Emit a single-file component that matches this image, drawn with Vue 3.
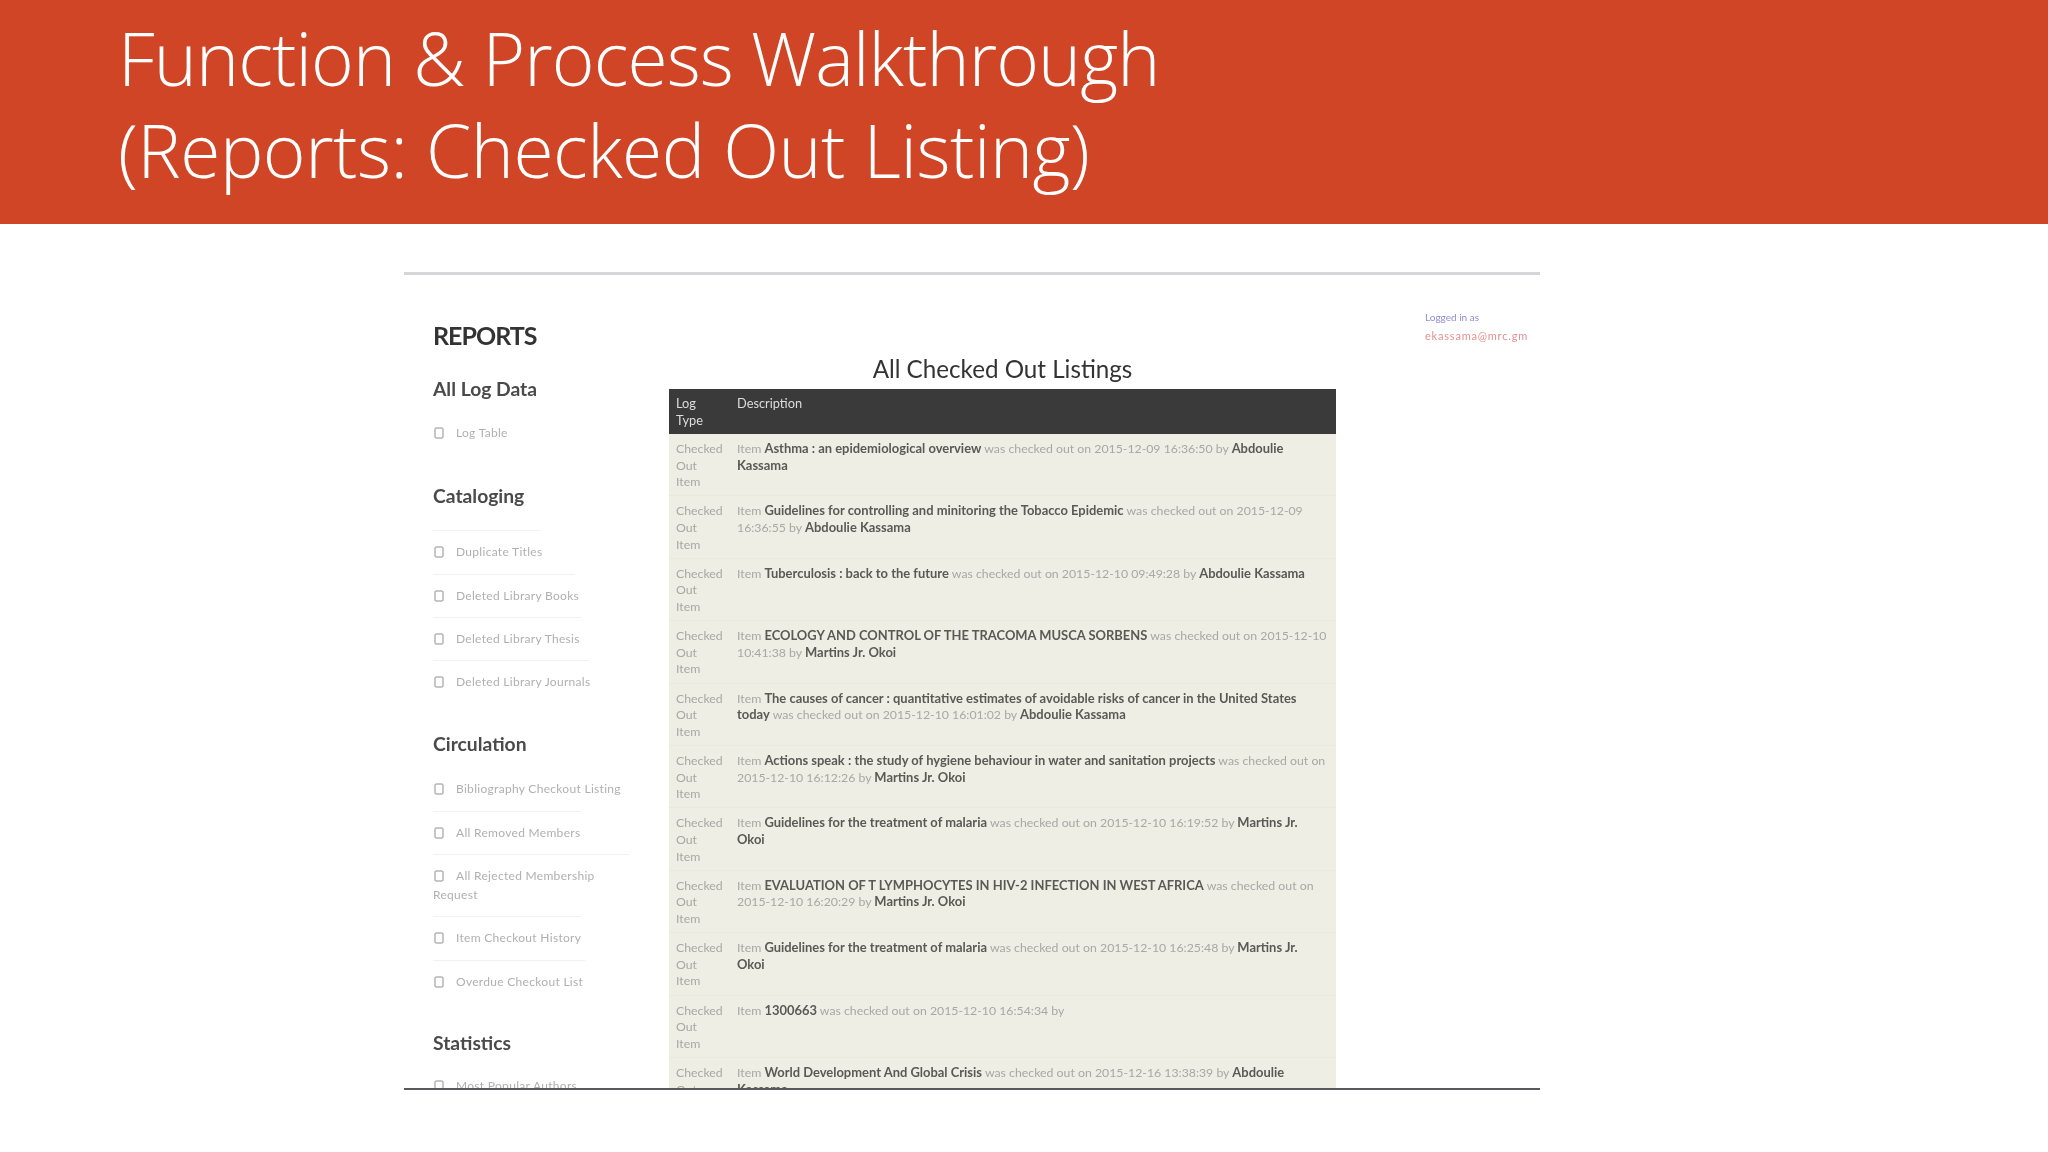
<script setup>
const groups = [
  { title: 'All Log Data', cls: 'g1', items: [{ t: 'Log Table', w: 0 }] },
  { title: 'Cataloging', cls: 'g2', rule: true, items: [
    { t: 'Duplicate Titles', w: 142 },
    { t: 'Deleted Library Books', w: 148 },
    { t: 'Deleted Library Thesis', w: 156 },
    { t: 'Deleted Library Journals', w: 0 }
  ] },
  { title: 'Circulation', cls: 'g3', items: [
    { t: 'Bibliography Checkout Listing', w: 148 },
    { t: 'All Removed Members', w: 196 },
    { t: 'All Rejected Membership Request', w: 148 },
    { t: 'Item Checkout History', w: 152 },
    { t: 'Overdue Checkout List', w: 0 }
  ] },
  { title: 'Statistics', cls: 'g4', items: [{ t: 'Most Popular Authors', w: 0 }] }
]
const rows = [
  ['Asthma : an epidemiological overview', '2015-12-09 16:36:50', 'Abdoulie Kassama'],
  ['Guidelines for controlling and minitoring the Tobacco Epidemic', '2015-12-09 16:36:55', 'Abdoulie Kassama'],
  ['Tuberculosis : back to the future', '2015-12-10 09:49:28', 'Abdoulie Kassama'],
  ['ECOLOGY AND CONTROL OF THE TRACOMA MUSCA SORBENS', '2015-12-10 10:41:38', 'Martins Jr. Okoi'],
  ['The causes of cancer : quantitative estimates of avoidable risks of cancer in the United States today', '2015-12-10 16:01:02', 'Abdoulie Kassama'],
  ['Actions speak : the study of hygiene behaviour in water and sanitation projects', '2015-12-10 16:12:26', 'Martins Jr. Okoi'],
  ['Guidelines for the treatment of malaria', '2015-12-10 16:19:52', 'Martins Jr. Okoi'],
  ['EVALUATION OF T LYMPHOCYTES IN HIV-2 INFECTION IN WEST AFRICA', '2015-12-10 16:20:29', 'Martins Jr. Okoi'],
  ['Guidelines for the treatment of malaria', '2015-12-10 16:25:48', 'Martins Jr. Okoi'],
  ['1300663', '2015-12-10 16:54:34', ''],
  ['World Development And Global Crisis', '2015-12-16 13:38:39', 'Abdoulie Kassama']
]
</script>

<template>
  <div class="slide">
    <header class="banner">
      <h1><span class="l1">Function &amp; Process Walkthrough</span><span class="l2">(Reports: Checked Out Listing)</span></h1>
    </header>
    <section class="shot">
      <aside class="side">
        <h2 class="reports">REPORTS</h2>
        <div v-for="g in groups" :key="g.title" class="group" :class="g.cls">
          <h3>{{ g.title }}</h3>
          <div v-if="g.rule" class="rule"></div>
          <div v-for="it in g.items" :key="it.t" class="item">
            <svg class="ico" width="10" height="12" viewBox="0 0 10 12">
              <rect x="1" y="1" width="8" height="10" rx="1" fill="none" stroke="#8f8f8f" stroke-width="1" />
            </svg>
            <span>{{ it.t }}</span>
            <div v-if="it.w" class="sep" :style="{ width: it.w + 'px' }"></div>
          </div>
        </div>
      </aside>
      <main class="main">
        <h2 class="heading">All Checked Out Listings</h2>
        <div class="head">
          <div>Log<br />Type</div>
          <div>Description</div>
        </div>
        <div v-for="(r, i) in rows" :key="i" class="row">
          <div>Checked<br />Out<br />Item</div>
          <div>Item <b>{{ r[0] }}</b> was checked out on {{ r[1] }} by <b>{{ r[2] }}</b></div>
        </div>
      </main>
      <div class="login">
        <div class="in">Logged in as</div>
        <div class="mail">ekassama@mrc.gm</div>
      </div>
    </section>
  </div>
</template>

<style>
html, body { background: #fff; }
</style>

<style scoped>
.slide { width: 2048px; height: 1152px; background: #fff; overflow: hidden; }
.banner {
  height: 224px; box-sizing: border-box; background: #d04525;
  padding: 12px 0 0 118px;
}
h1 {
  margin: 0; color: #fff; font: 300 73px/92px "Open Sans", sans-serif;
  white-space: nowrap;
}
.l1, .l2 { display: block; }
.l1 { letter-spacing: -0.9px; }
.l2 { letter-spacing: -0.48px; }
.shot {
  display: flex; box-sizing: border-box; width: 1136px; height: 818px;
  margin: 48px 0 0 404px; overflow: hidden;
  border-top: 3px solid #d6d6da; border-bottom: 2px solid #5a5a5e;
  font-family: Lato, sans-serif; filter: blur(0.6px);
}
.side { width: 265px; flex: none; padding-left: 29px; box-sizing: border-box; }
.reports {
  margin: 45px 0 0; font: 700 25px/30px Lato, sans-serif; color: #333;
  letter-spacing: -1px;
}
.group h3 { margin: 0; font: 700 19.3px/24px Lato, sans-serif; color: #4a4a4a; }
.g1 { margin-top: 27px; }
.g2 { margin-top: 18px; }
.g3 { margin-top: 17px; }
.g4 { margin-top: 16px; }
.g1 h3 { margin-bottom: 22px; }
.g3 h3 { margin-bottom: 23px; }
.g4 h3 { margin-bottom: 21px; }
.rule { width: 108px; height: 1px; background: #f2f2f2; margin: 22px 0 11px; }
.item {
  position: relative; width: 200px; font: 400 12px/19px Lato, sans-serif;
  letter-spacing: 0.3px; color: #b0b0b0; padding-bottom: 24.3px;
}
.ico { vertical-align: -2px; margin: 0 12px 0 1px; }
.sep { position: absolute; left: 0; bottom: 11px; height: 1px; background: #f1f1f1; }
.main { width: 667px; flex: none; }
.heading {
  margin: 74px 0 0; height: 40px; text-align: center; color: #333;
  font: 400 24.2px/40px Lato, sans-serif;
}
.head, .row {
  display: grid; grid-template-columns: 61px 1fr; box-sizing: border-box;
  font: 400 12.3px/16.6px Lato, sans-serif;
}
.head { height: 45px; background: #3a3a3a; color: #ddd; padding: 6px 0 0 7px; font-size: 12.8px; }
.row {
  height: 62.4px; background: #eeeee5; color: #a8a8a4; padding: 7px 9px 0 7px;
  border-bottom: 1px solid #e9e9df;
}
.row b { color: #5a5a55; font-weight: 700; font-size: 12.95px; line-height: 1; }
.login { margin: 33px 0 0 89px; font-family: Lato, sans-serif; }
.in { font-size: 10px; line-height: 19px; color: #8d8dd6; }
.mail { font-size: 11px; line-height: 18px; color: #e59090; letter-spacing: 0.8px; white-space: nowrap; }
</style>
